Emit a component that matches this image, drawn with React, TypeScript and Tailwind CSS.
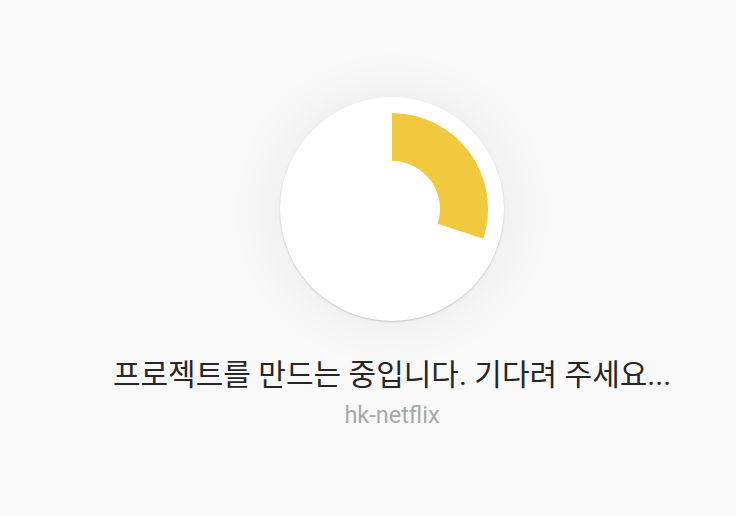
export default function App() {
  return (
    <div className="min-h-screen bg-[#f9f9f9] flex flex-col items-center justify-center pl-12 pt-[12px] font-['Roboto','Noto_Sans_CJK_KR',sans-serif]">
      <div className="w-[224px] h-[224px] rounded-full bg-white shadow-[0_0_60px_rgba(0,0,0,0.07),0_1px_2px_rgba(0,0,0,0.18)]">
        <svg width="224" height="224" viewBox="0 0 224 224">
          <path
            d="M112 16 A96 96 0 0 1 203.3 141.7 L157.65 126.83 A48 48 0 0 0 112 64 Z"
            fill="#f1c93f"
          />
        </svg>
      </div>
      <h1 className="mt-[32px] text-[30px] leading-[44px] text-[#262626] font-normal">
        프로젝트를 만드는 중입니다. 기다려 주세요...
      </h1>
      <p className="mt-[2px] text-[23.5px] leading-[32px] text-[#a8a8a8]">hk-netflix</p>
    </div>
  );
}
